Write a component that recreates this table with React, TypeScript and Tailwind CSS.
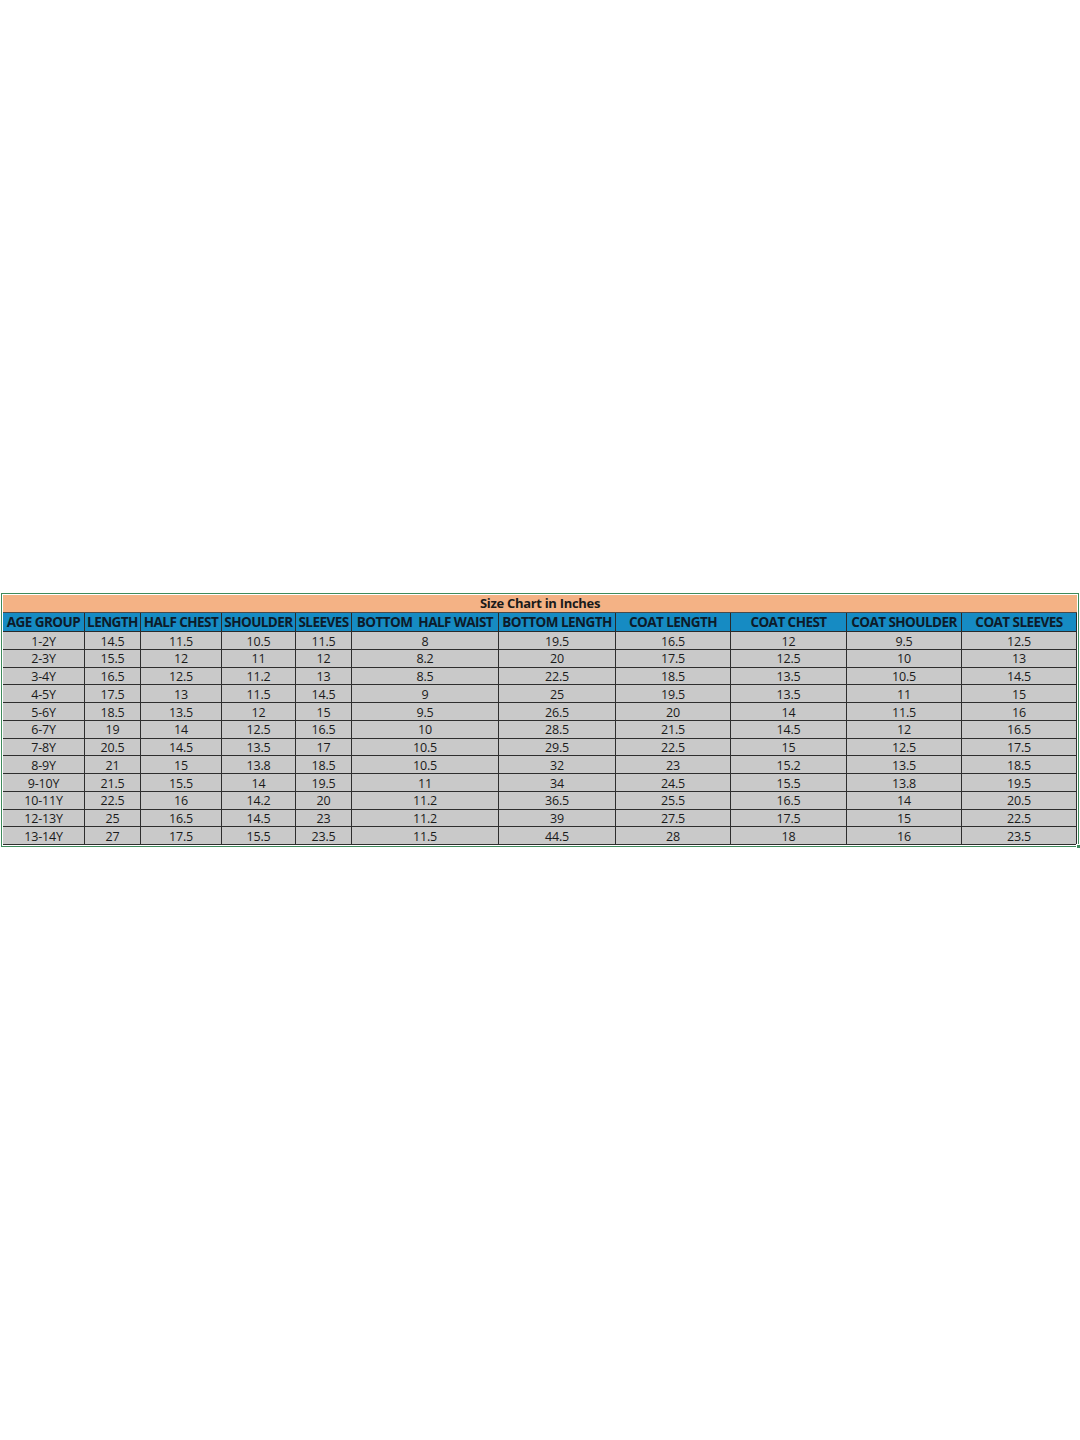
import React from "react";

const headers = [
  "AGE GROUP",
  "LENGTH",
  "HALF CHEST",
  "SHOULDER",
  "SLEEVES",
  "BOTTOM\u00a0 HALF WAIST",
  "BOTTOM LENGTH",
  "COAT LENGTH",
  "COAT CHEST",
  "COAT SHOULDER",
  "COAT SLEEVES",
];
const rows: string[][] = [
  ["1-2Y", "14.5", "11.5", "10.5", "11.5", "8", "19.5", "16.5", "12", "9.5", "12.5"],
  ["2-3Y", "15.5", "12", "11", "12", "8.2", "20", "17.5", "12.5", "10", "13"],
  ["3-4Y", "16.5", "12.5", "11.2", "13", "8.5", "22.5", "18.5", "13.5", "10.5", "14.5"],
  ["4-5Y", "17.5", "13", "11.5", "14.5", "9", "25", "19.5", "13.5", "11", "15"],
  ["5-6Y", "18.5", "13.5", "12", "15", "9.5", "26.5", "20", "14", "11.5", "16"],
  ["6-7Y", "19", "14", "12.5", "16.5", "10", "28.5", "21.5", "14.5", "12", "16.5"],
  ["7-8Y", "20.5", "14.5", "13.5", "17", "10.5", "29.5", "22.5", "15", "12.5", "17.5"],
  ["8-9Y", "21", "15", "13.8", "18.5", "10.5", "32", "23", "15.2", "13.5", "18.5"],
  ["9-10Y", "21.5", "15.5", "14", "19.5", "11", "34", "24.5", "15.5", "13.8", "19.5"],
  ["10-11Y", "22.5", "16", "14.2", "20", "11.2", "36.5", "25.5", "16.5", "14", "20.5"],
  ["12-13Y", "25", "16.5", "14.5", "23", "11.2", "39", "27.5", "17.5", "15", "22.5"],
  ["13-14Y", "27", "17.5", "15.5", "23.5", "11.5", "44.5", "28", "18", "16", "23.5"],
];

export default function App() {
  return (
    <div
      className="w-[1080px] h-[1440px] bg-white pt-[593px] pl-[1px]"
      style={{ fontFamily: '"Open Sans", "Noto Sans", sans-serif' }}
    >
      <div className="relative w-[1078px] border border-[#3f8a5c] py-[1px] pl-[1px]">
        <div className="grid grid-cols-[82px_56px_81px_74px_56px_147px_117px_115px_116px_115px_115px] w-[1074px]">
          <div className="col-span-11 h-[18px] bg-[#f4b285] border-b border-[#4a4a4a] flex items-center justify-center text-[13px] font-bold text-[#1a1a1a] tracking-[-0.3px]">
            Size Chart in Inches
          </div>
          {headers.map((h) => (
            <div
              key={h}
              className="h-[19px] bg-[#168bc3] border-b border-r border-[#2a2a2a] flex items-center justify-center whitespace-nowrap text-[13.5px] font-bold text-[#0d1b2a] tracking-[-0.55px]"
            >
              {h}
            </div>
          ))}
          {rows.map((r, ri) =>
            r.map((c, ci) => (
              <div
                key={ri + "-" + ci}
                className="h-[17.75px] pt-[3px] bg-[#c9c9c9] border-b border-r border-[#2e2e2e] flex items-center justify-center text-[12.5px] text-[#1a1a1a] tracking-[-0.2px]"
              >
                {c}
              </div>
            ))
          )}
        </div>
        <div className="absolute right-[-3px] bottom-[-3px] w-[5px] h-[5px] bg-[#3f8a5c] border border-white" />
      </div>
    </div>
  );
}
